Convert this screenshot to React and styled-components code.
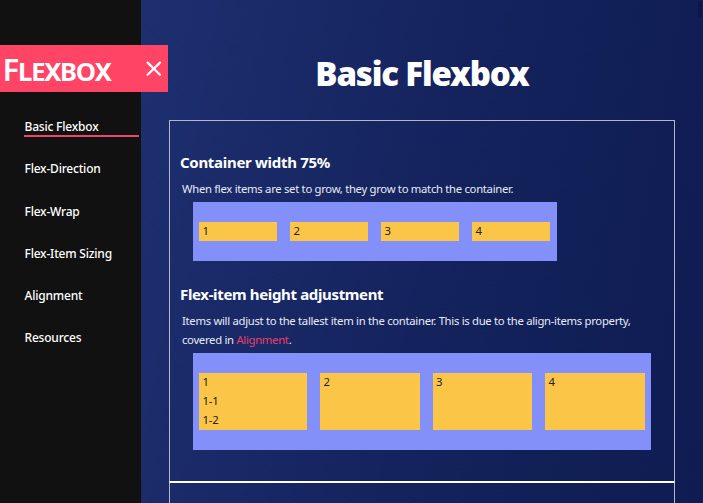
import React from "react";
import styled, { createGlobalStyle } from "styled-components";

const GlobalStyle = createGlobalStyle`
  * { box-sizing: border-box; }
  html, body { margin: 0; height: 100%; overflow: hidden; }
  h1, h2, p { margin: 0; }
`;

const Page = styled.div`
  position: relative;
  display: flex;
  width: 703px;
  height: 503px;
  overflow: hidden;
  color: #fff;
  font-family: "Noto Sans", "Open Sans", sans-serif;
  background: #10205a;
`;

const Sidebar = styled.aside`
  position: relative;
  z-index: 1;
  flex: 0 0 140.5px;
  min-width: 0;
  padding-top: 45px;
  background: #111;
`;

const Brand = styled.header`
  display: flex;
  align-items: center;
  justify-content: space-between;
  width: 168px;
  height: 47px;
  padding: 1px 6px 0 2.5px;
  background: #ff4466;
`;

const BrandName = styled.span`
  font-size: 31px;
  font-weight: 600;
  font-variant: small-caps;
  line-height: 44px;
  letter-spacing: -1.2px;
`;

const Nav = styled.nav`
  display: flex;
  flex-direction: column;
  gap: 20.3px;
  padding: 23px 1.5px 0 24px;
`;

const NavLink = styled.a`
  height: 22px;
  padding: 1px 0 0 0.5px;
  border-bottom: 2px solid ${(p) => (p.$active ? "#f04466" : "transparent")};
  font-size: 12px;
  font-weight: 500;
  line-height: 22px;
  white-space: nowrap;
  letter-spacing: -0.2px;
`;

const Main = styled.main`
  flex: 1;
  min-width: 0;
  padding: 0 28px 0 28.5px;
  background: linear-gradient(100deg, #1e2f70 0%, #14235d 52%, #0f1c52 100%);
`;

const Title = styled.h1`
  height: 120px;
  padding-top: 51px;
  font-size: 33px;
  font-weight: 900;
  line-height: 46px;
  text-align: center;
  white-space: nowrap;
  letter-spacing: -1.15px;
`;

const Panel = styled.section`
  height: 362px;
  padding: 30px 10px 0;
  border: 1px solid #b0b7cd;
  border-bottom-color: #fff;

  & + & {
    border-top-color: #fff;
  }
`;

const Heading = styled.h2`
  height: 23px;
  font-size: 15px;
  font-weight: 700;
  line-height: 22px;
  white-space: nowrap;
  letter-spacing: ${(p) => p.$tracking};
`;

const Copy = styled.p`
  padding: 5px 0 4px 2px;
  color: #e8eaf4;
  font-size: 11.3px;
  line-height: 19px;
  white-space: nowrap;
  letter-spacing: -0.3px;
`;

const Link = styled.a`
  color: #e83e66;
`;

const Demo = styled.div`
  display: flex;
  gap: 13px;
  width: ${(p) => p.$width};
  margin: 0 0 ${(p) => p.$after || "0"} 13px;
  padding: 20px 6.5px 0 6px;
  height: ${(p) => p.$height};
  align-items: flex-start;
  background: #8490fa;
`;

const Item = styled.div`
  flex: ${(p) => p.$flex || "1 1 0"};
  height: ${(p) => p.$height};
  padding-left: 3.5px;
  background: #fbc648;
`;

const ItemText = styled.p`
  && { margin-top: -1px; }
  color: #222018;
  font-size: 11.3px;
  line-height: 19px;
  letter-spacing: -0.2px;
  white-space: pre-line;
`;

const ScrollThumb = styled.div`
  position: absolute;
  top: 1px;
  right: 1px;
  width: 4px;
  height: 17px;
  background: #0c1748;
`;

const CloseIcon = () => (
  <svg width="17" height="19" viewBox="0 0 17 19" fill="none" stroke="#fff" strokeWidth="2.2" strokeLinecap="round">
    <path d="M2.6 2.6L15 14.8M15 2.6L2.6 14.8" />
  </svg>
);

const links = ["Basic Flexbox", "Flex-Direction", "Flex-Wrap", "Flex-Item Sizing", "Alignment", "Resources"];

export default function App() {
  return (
    <Page>
      <GlobalStyle />
      <Sidebar>
        <Brand>
          <BrandName>Flexbox</BrandName>
          <CloseIcon />
        </Brand>
        <Nav>
          {links.map((label, i) => (
            <NavLink key={label} $active={i === 0}>{label}</NavLink>
          ))}
        </Nav>
      </Sidebar>
      <Main>
        <Title>Basic Flexbox</Title>
        <Panel>
          <Heading $tracking="-0.3px">Container width 75%</Heading>
          <Copy>When flex items are set to grow, they grow to match the container.</Copy>
          <Demo $width="363.5px" $height="59px" $after="22px">
            {["1", "2", "3", "4"].map((text) => (
              <Item key={text} $height="19px"><ItemText>{text}</ItemText></Item>
            ))}
          </Demo>
          <Heading $tracking="-0.35px">Flex-item height adjustment</Heading>
          <Copy>
            Items will adjust to the tallest item in the container. This is due to the align-items property,
            <br />
            covered in <Link>Alignment</Link>.
          </Copy>
          <Demo $width="458px" $height="97px">
            {["1\n1-1\n1-2", "2", "3", "4"].map((text, i) => (
              <Item key={text} $flex={i === 0 ? "0 0 108px" : undefined} $height="57px">
                <ItemText>{text}</ItemText>
              </Item>
            ))}
          </Demo>
        </Panel>
        <Panel />
      </Main>
      <ScrollThumb />
    </Page>
  );
}
